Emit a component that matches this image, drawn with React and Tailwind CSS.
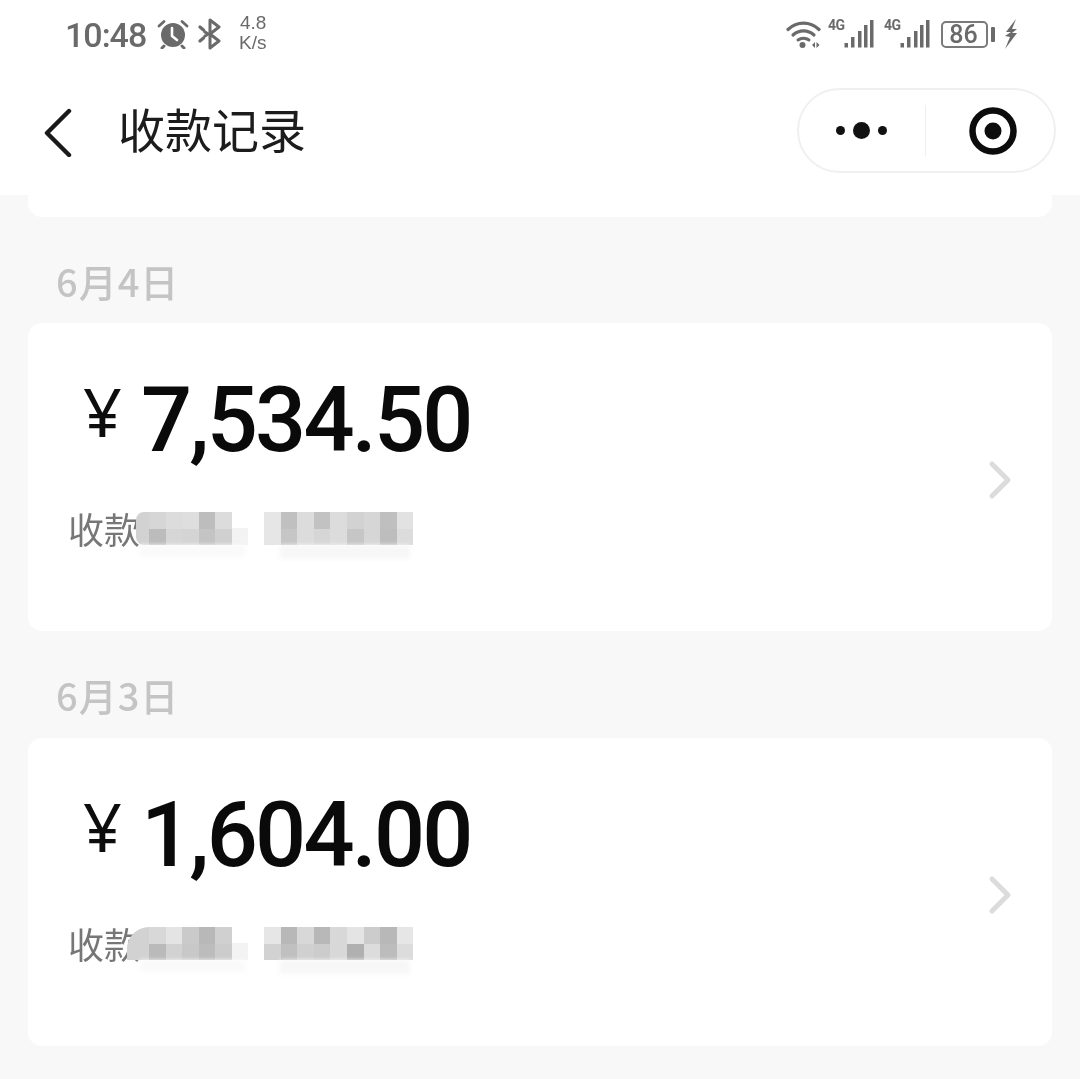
const CJK = "font-['Noto_Sans_CJK_SC','Noto_Sans',sans-serif]";

function Alarm() {
  return (
    <svg width="32" height="30" viewBox="0 0 32 30" className="shrink-0">
      <circle cx="16" cy="16" r="12" fill="#6a6a6a" />
      <path d="M15 9v8l5 4" fill="none" stroke="#fff" strokeWidth="2.6" strokeLinecap="round" strokeLinejoin="round" />
      <path d="M2 7 7 2.5M30 7 25 2.5" stroke="#6a6a6a" strokeWidth="2.8" strokeLinecap="round" />
      <path d="M7 27l-2 2M25 27l2 2" stroke="#6a6a6a" strokeWidth="3" strokeLinecap="round" />
    </svg>
  );
}

function Bluetooth() {
  return (
    <svg width="24" height="32" viewBox="0 0 24 32" className="shrink-0">
      <path d="M12 2l9 7-9 7 9 7-9 7z" fill="none" stroke="#6a6a6a" strokeWidth="3" strokeLinejoin="round" />
      <path d="M2 9l3.5 3M7 14l3 2M10 16l-3 2M5.500 20l-3.500 3" fill="none" stroke="#6a6a6a" strokeWidth="3.200" strokeLinecap="round" />
    </svg>
  );
}

function Wifi() {
  return (
    <svg width="36" height="30" viewBox="0 0 36 30" className="shrink-0">
      <path d="M2 10.5C11 2 24 2 33 10.5" fill="none" stroke="#6a6a6a" strokeWidth="3.2" strokeLinecap="round" />
      <path d="M7 16C13 10.5 22 10.5 28 16" fill="none" stroke="#6a6a6a" strokeWidth="3.2" strokeLinecap="round" />
      <path d="M12 21C15 18.5 20 18.5 23 21" fill="none" stroke="#6a6a6a" strokeWidth="3" strokeLinecap="round" />
      <circle cx="16.5" cy="26" r="3" fill="#6a6a6a" />
      <path d="M26 26l3-3v6zM30.5 23l3 3-3 3z" fill="#6a6a6a" />
    </svg>
  );
}

function Signal() {
  return (
    <svg width="30" height="30" viewBox="0 0 30 30" className="shrink-0">
      <rect x="0.5" y="24" width="3.5" height="4.5" fill="#6a6a6a" />
      <rect x="7" y="18" width="3.5" height="10.5" fill="#6a6a6a" />
      <rect x="14" y="12" width="3.5" height="16.5" fill="#6a6a6a" />
      <rect x="20" y="6" width="3.5" height="22.5" fill="#6a6a6a" />
      <rect x="26" y="1" width="3.5" height="27.5" fill="#6a6a6a" />
    </svg>
  );
}

function Bolt() {
  return (
    <svg width="14" height="32" viewBox="0 0 14 32" className="shrink-0">
      <path d="M12 1 2 14h5l-6 4 5 1-5 12 12-16H8l5-4H8z" fill="#6a6a6a" />
    </svg>
  );
}

function StatusBar() {
  return (
    <div className="h-[68px] flex items-center pl-[65px] pr-[62px] text-[#6a6a6a]">
      <span className="font-['Roboto',sans-serif] font-medium text-[34px] leading-none tracking-[-1px] w-[92px] mt-[2px]">10:48</span>
      <Alarm />
      <span className="w-[9px]" />
      <Bluetooth />
      <div className="ml-[17px] w-[40px] font-['Liberation_Sans',sans-serif] text-[19px] leading-[20px] mt-[-2px]">
        <div className="pl-[1px]">4.8</div>
        <div>K/s</div>
      </div>
      <div className="ml-auto flex items-center">
        <Wifi />
        <span className="ml-[6px] self-start mt-[0px] font-['Roboto',sans-serif] font-bold text-[14px] leading-none w-[16px] tracking-[-0.5px]">4G</span>
        <Signal />
        <span className="ml-[10px] self-start mt-[0px] font-['Roboto',sans-serif] font-bold text-[14px] leading-none w-[16px] tracking-[-0.5px]">4G</span>
        <Signal />
        <div className="ml-[11px] w-[47px] h-[27px] rounded-[5px] border-[2.5px] border-[#7a7a7a] flex items-center justify-center font-['Roboto',sans-serif] font-medium text-[25px] leading-none pr-[2px]">86</div>
        <span className="ml-[3px] w-[4px] h-[15px] bg-[#6a6a6a] rounded-[1px]" />
        <span className="w-[9px]" />
        <Bolt />
      </div>
    </div>
  );
}

function NavBar() {
  return (
    <div className="flex items-start pl-[44px] relative h-[127px]">
      <svg width="30" height="50" viewBox="0 0 30 50" className="mt-[39px] shrink-0">
        <path d="M25 4 3 26l22 22" fill="none" stroke="#1a1a1a" strokeWidth="4.4" strokeLinecap="round" strokeLinejoin="round" />
      </svg>
      <h1 className={`${CJK} ml-[44px] mt-[24px] text-[47px] leading-[72px] font-normal text-[#1c1c1c]`}>收款记录</h1>
      <div className="absolute left-[797px] top-[20px] w-[259px] h-[85px] rounded-full border-2 border-[#f0f0f0] bg-white flex items-center">
        <div className="w-[124px] mr-[2px] flex items-center justify-center gap-[8px]">
          <span className="w-[9px] h-[9px] rounded-full bg-[#111]" />
          <span className="w-[17px] h-[17px] rounded-full bg-[#111]" />
          <span className="w-[9px] h-[9px] rounded-full bg-[#111]" />
        </div>
        <span className="w-[1px] h-[51px] bg-[#efefef]" />
        <div className="flex-1 flex items-center justify-center pl-[5px]">
          <svg width="50" height="50" viewBox="0 0 50 50">
            <circle cx="25" cy="25" r="20.5" fill="none" stroke="#0c0c0c" strokeWidth="6.5" />
            <circle cx="25" cy="25" r="8.5" fill="#0c0c0c" />
          </svg>
        </div>
      </div>
    </div>
  );
}

function Mosaic({ left, right, pre }) {
  const Row = ({ cells }) => (
    <div className="flex h-[16.5px]">
      {cells.map((c, i) => (
        <span key={i} className="w-[16.6px] shrink-0" style={{ background: c }} />
      ))}
    </div>
  );
  return (
    <div className="absolute left-0 top-0 h-[33px] w-full">
      <div className={`absolute top-0 h-[33px] bg-[#d2d2d2] ${pre === "big" ? "left-[127px] w-[26px] rounded-tl-[22px]" : "left-[136px] w-[16px] rounded-l-[8px]"}`} />
      <div className="absolute left-[149px] top-0">
        {left.map((r, i) => <Row key={i} cells={r} />)}
      </div>
      <div className="absolute left-[232px] top-[16px] w-[16px] h-[17px] bg-[#f3f3f3]" />
      <div className="absolute left-[264px] top-0">
        {right.map((r, i) => <Row key={i} cells={r} />)}
      </div>
      <div className="absolute left-[140px] top-[33px] w-[105px] h-[12px] bg-[#fafafa] blur-[2px]" />
      <div className="absolute left-[280px] top-[33px] w-[130px] h-[14px] bg-[#f7f7f7] blur-[2px]" />
    </div>
  );
}

function Card({ amount, mosaic, pre }) {
  return (
    <div className="mx-[28px] h-[308px] rounded-[14px] bg-white relative flex">
      <div className="flex-1 pt-[50px] pl-[56px]">
        <div className="flex items-start h-[90px]">
          <span className="font-['Noto_Sans',sans-serif] text-[68px] leading-[90px] mt-[-7px] font-normal text-[#0d0d0d] w-[58px] ml-[-1px]">¥</span>
          <span className="font-['Roboto',sans-serif] font-medium text-[90px] leading-[90px] text-[#0a0a0a] tracking-[-2.8px] mt-[3px]">{amount}</span>
        </div>
        <div className={`${CJK} mt-[40px] text-[36px] leading-[50px] text-[#777] ml-[-16px]`}>收款</div>
      </div>
      <div className="absolute left-[-28px] top-[189px] right-0 h-[33px]">
        <Mosaic {...mosaic} pre={pre} />
      </div>
      <svg width="30" height="40" viewBox="0 0 30 40" className="mt-[137px] mr-[37px] shrink-0">
        <path d="M9 4l16 16L9 36" fill="none" stroke="#dcdcdc" strokeWidth="5" strokeLinecap="round" strokeLinejoin="round" transform="translate(-2 0)" />
      </svg>
    </div>
  );
}

function DateLabel({ children, h }) {
  return (
    <div className={`${CJK} ${h} pl-[56px] pt-[24px] flex items-start text-[38px] font-medium leading-[80px] tracking-[1px] text-[#c4c4c4]`}>
      {children}
    </div>
  );
}

const m1 = {
  left: [
    ["#d6d6d6", "#dcdcdc", "#dedede", "#bdbdbd", "#dcdcdc"],
    ["#bcbcbc", "#d6d6d6", "#d4d4d4", "#c4c4c4", "#d0d0d0"],
  ],
  right: [
    ["#e6e6e6", "#c0c0c0", "#dcdcdc", "#c2c2c2", "#dcdcdc", "#d2d2d2", "#d6d6d6", "#bfbfbf", "#e2e2e2"],
    ["#e6e6e6", "#c6c6c6", "#dcdcdc", "#d6d6d6", "#dcdcdc", "#c6c6c6", "#d6d6d6", "#bdbdbd", "#dcdcdc"],
  ],
};
const m2 = {
  left: [
    ["#d8d8d8", "#e4e4e4", "#cacaca", "#b8b8b8", "#d0d0d0"],
    ["#bababa", "#d2d2d2", "#c8c8c8", "#bcbcbc", "#cccccc"],
  ],
  right: [
    ["#e6e6e6", "#b8b8b8", "#d8d8d8", "#b8b8b8", "#d8d8d8", "#e4e4e4", "#cccccc", "#b8b8b8", "#e6e6e6"],
    ["#d2d2d2", "#c0c0c0", "#d0d0d0", "#cccccc", "#d8d8d8", "#b0b0b0", "#dcdcdc", "#bcbcbc", "#dcdcdc"],
  ],
};

export default function App() {
  return (
    <div className="w-[1080px] h-[1079px] overflow-hidden bg-[#f8f8f8] blur-[0.5px]">
      <header className="h-[195px] bg-white">
        <StatusBar />
        <NavBar />
      </header>
      <div className="mx-[28px] h-[22px] bg-white rounded-b-[14px]" />
      <DateLabel h="h-[106px]">6月4日</DateLabel>
      <Card amount="7,534.50" mosaic={m1} pre="small" />
      <DateLabel h="h-[107px]">6月3日</DateLabel>
      <Card amount="1,604.00" mosaic={m2} pre="big" />
    </div>
  );
}
